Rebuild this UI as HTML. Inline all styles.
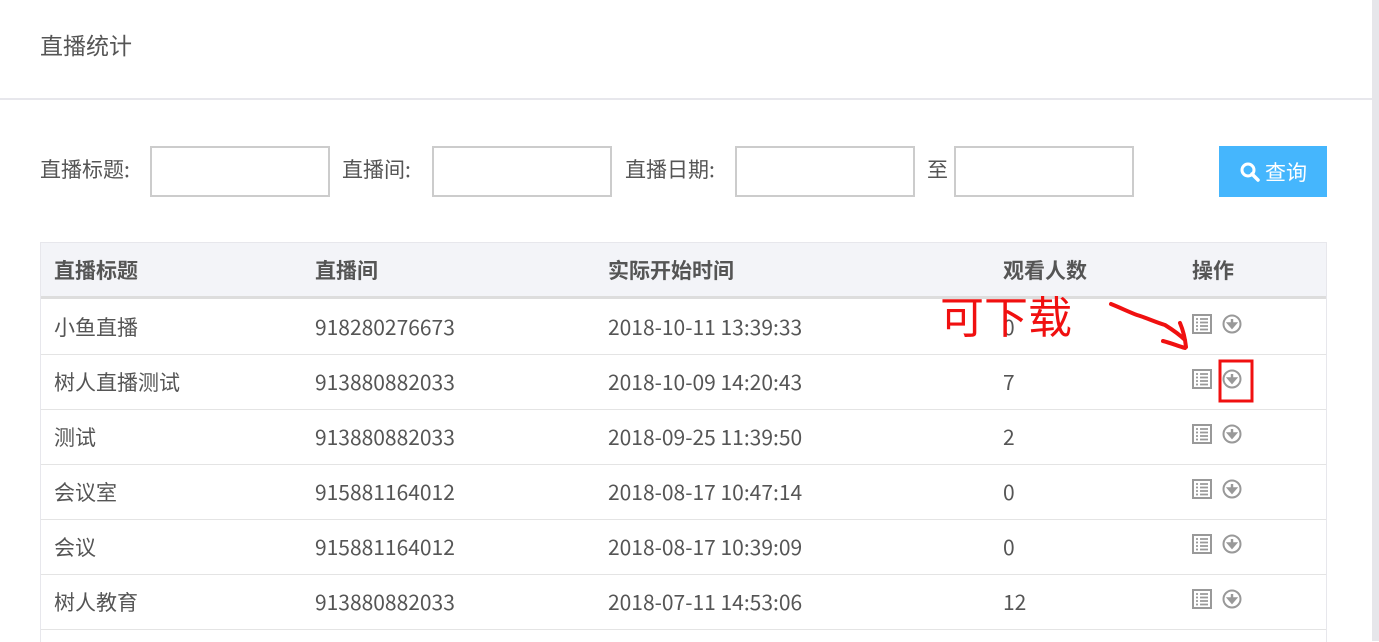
<!DOCTYPE html>
<html><head><meta charset="utf-8"><style>
*{margin:0;padding:0;box-sizing:border-box}
body{width:1379px;height:641px;overflow:hidden;background:#fff;font-family:"Noto Sans CJK SC","Liberation Sans",sans-serif;color:#555;position:relative}
.strip{position:absolute;left:1372px;top:0;width:7px;height:641px;background:#e6e6ea}
.title{position:absolute;left:40px;top:27px;font-size:23px;color:#555}
.sep{position:absolute;left:0;top:98px;width:1372px;height:2px;background:#e7e7ec}
.lbl{position:absolute;top:154px;font-size:21px;color:#555}
.inp{position:absolute;top:146px;width:180px;height:51px;border:2px solid #ccc}
.btn{position:absolute;left:1219px;top:146px;width:108px;height:51px;background:#45b6fd;color:#fff;font-size:21px;display:flex;align-items:center;justify-content:center;gap:4px}
.tbl{position:absolute;left:40px;top:242px;width:1287px;height:400px;border:1px solid #e7e7ec;border-bottom:none}
.th{position:absolute;left:0;top:0;width:100%;height:56px;background:#f3f4f8;border-bottom:3px solid #ddd}
.row{position:absolute;left:0;width:100%;height:55px;border-bottom:1px solid #e4e4e4}
.c{position:absolute;font-size:21px;top:50%;transform:translateY(-50%);white-space:nowrap}
.th .c{font-weight:bold;color:#555;font-size:21px}
</style></head><body>
<div class="strip"></div>
<div class="title">直播统计</div>
<div class="sep"></div>
<div class="lbl" style="left:40px">直播标题:</div><div class="inp" style="left:150px"></div>
<div class="lbl" style="left:342px">直播间:</div><div class="inp" style="left:432px"></div>
<div class="lbl" style="left:625px">直播日期:</div><div class="inp" style="left:735px"></div>
<div class="lbl" style="left:927px">至</div><div class="inp" style="left:954px"></div>
<div class="btn"><svg width="22" height="22" viewBox="0 0 22 22"><circle cx="9" cy="9" r="6" fill="none" stroke="#fff" stroke-width="3"/><path d="M13 13l6 6" stroke="#fff" stroke-width="3.5" stroke-linecap="round"/></svg>查询</div>
<div class="tbl">
<div class="th"><div class="c" style="left:13px">直播标题</div><div class="c" style="left:274px">直播间</div><div class="c" style="left:567px">实际开始时间</div><div class="c" style="left:962px">观看人数</div><div class="c" style="left:1151px">操作</div></div>
<div class="row" style="top:57px"><div class="c" style="left:13px">小鱼直播</div><div class="c" style="left:274px">918280276673</div><div class="c" style="left:567px">2018-10-11 13:39:33</div><div class="c" style="left:962px">0</div></div>
<div class="row" style="top:112px"><div class="c" style="left:13px">树人直播测试</div><div class="c" style="left:274px">913880882033</div><div class="c" style="left:567px">2018-10-09 14:20:43</div><div class="c" style="left:962px">7</div></div>
<div class="row" style="top:167px"><div class="c" style="left:13px">测试</div><div class="c" style="left:274px">913880882033</div><div class="c" style="left:567px">2018-09-25 11:39:50</div><div class="c" style="left:962px">2</div></div>
<div class="row" style="top:222px"><div class="c" style="left:13px">会议室</div><div class="c" style="left:274px">915881164012</div><div class="c" style="left:567px">2018-08-17 10:47:14</div><div class="c" style="left:962px">0</div></div>
<div class="row" style="top:277px"><div class="c" style="left:13px">会议</div><div class="c" style="left:274px">915881164012</div><div class="c" style="left:567px">2018-08-17 10:39:09</div><div class="c" style="left:962px">0</div></div>
<div class="row" style="top:332px"><div class="c" style="left:13px">树人教育</div><div class="c" style="left:274px">913880882033</div><div class="c" style="left:567px">2018-07-11 14:53:06</div><div class="c" style="left:962px">12</div></div>
</div>
<svg style="position:absolute;left:0;top:0" width="1379" height="641">
<defs><g id="ico"><rect x="0" y="0" width="18" height="18" fill="none" stroke="#999" stroke-width="2"/><path d="M3 4h2M7 4h8M3 7.5h2M7 7.5h8M3 11h2M7 11h8M3 14.5h2M7 14.5h8" stroke="#999" stroke-width="1.8"/><circle cx="39" cy="9" r="8.5" fill="none" stroke="#999" stroke-width="2"/><path d="M39 4v6M35.5 8.5l3.5 4 3.5-4z" stroke="#999" stroke-width="2.4" fill="#999"/></g></defs>
<use href="#ico" x="1193" y="315"/><use href="#ico" x="1193" y="370"/><use href="#ico" x="1193" y="425"/><use href="#ico" x="1193" y="480"/><use href="#ico" x="1193" y="535"/><use href="#ico" x="1193" y="590"/>
<text x="940" y="333" font-size="44" fill="#f01010" font-family="Noto Sans CJK SC,sans-serif">可下载</text>
<path d="M1111 304c10 4 18 8 26 11 10 3 18 7 28 10 8 5 14 9 20 15M1180 323c3 7 5 15 6 24M1163 341c8 2 15 5 22 7" fill="none" stroke="#f01010" stroke-width="4" stroke-linecap="round"/>
<rect x="1220" y="361" width="32" height="40" fill="none" stroke="#f01010" stroke-width="3"/>
</svg>
</body></html>
